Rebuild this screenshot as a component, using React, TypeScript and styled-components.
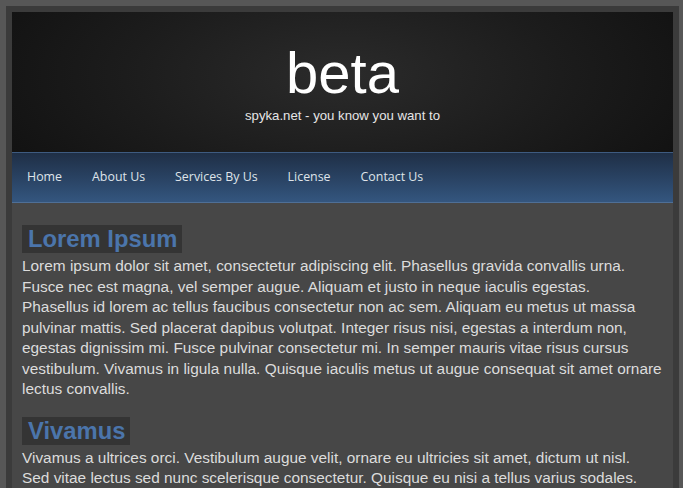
import React from "react";
import styled, { createGlobalStyle } from "styled-components";

const navItems = ["Home", "About Us", "Services By Us", "License", "Contact Us"];

// lines kept as in the original layout so the wrapping matches
const sections = [
  {
    title: "Lorem Ipsum",
    lines: [
      "Lorem ipsum dolor sit amet, consectetur adipiscing elit. Phasellus gravida convallis urna.",
      "Fusce nec est magna, vel semper augue. Aliquam et justo in neque iaculis egestas.",
      "Phasellus id lorem ac tellus faucibus consectetur non ac sem. Aliquam eu metus ut massa",
      "pulvinar mattis. Sed placerat dapibus volutpat. Integer risus nisi, egestas a interdum non,",
      "egestas dignissim mi. Fusce pulvinar consectetur mi. In semper mauris vitae risus cursus",
      "vestibulum. Vivamus in ligula nulla. Quisque iaculis metus ut augue consequat sit amet ornare",
      "lectus convallis.",
    ],
  },
  {
    title: "Vivamus",
    lines: [
      "Vivamus a ultrices orci. Vestibulum augue velit, ornare eu ultricies sit amet, dictum ut nisl.",
      "Sed vitae lectus sed nunc scelerisque consectetur. Quisque eu nisi a tellus varius sodales.",
    ],
  },
];

const App = () => {
  return (
    <>
      <GlobalStyle />
      <Wrapper>
        <Header>
          <SiteTitle>beta</SiteTitle>
          <Tagline>spyka.net - you know you want to</Tagline>
        </Header>
        <NavBar>
          {navItems.map((item) => (
            <NavLink key={item} href="#">
              {item}
            </NavLink>
          ))}
        </NavBar>
        <Content>
          {sections.map((s) => (
            <Section key={s.title}>
              <SectionTitle>{s.title}</SectionTitle>
              <Paragraph>
                {s.lines.map((line, i) => (
                  <Line key={i}>{line}</Line>
                ))}
              </Paragraph>
            </Section>
          ))}
        </Content>
      </Wrapper>
    </>
  );
};

const GlobalStyle = createGlobalStyle`
  html, body {
    margin: 0;
    padding: 0;
    background: #575757;
    overflow: hidden;
  }
  body {
    padding: 6px 4px 0 6px;
    font-family: "Liberation Sans", Arial, sans-serif;
  }
`;

const Wrapper = styled.div`
  border: 6px solid #3b3b3b;
  border-bottom: none;
  background: #474747;
  min-height: 600px;
`;

const Header = styled.div`
  height: 140px;
  display: flex;
  flex-direction: column;
  align-items: center;
  background: radial-gradient(ellipse 60% 120% at 50% 45%, #2b2b2b 0%, #1c1c1c 55%, #111111 100%);
`;

const SiteTitle = styled.h1`
  margin: 31px 0 0;
  font-family: "Liberation Sans", Arial, sans-serif;
  font-weight: normal;
  font-size: 58px;
  line-height: 60px;
  color: #ffffff;
`;

const Tagline = styled.div`
  margin-top: 5px;
  font-size: 13.2px;
  color: #e6e6e6;
`;

const NavBar = styled.nav`
  display: flex;
  height: 49px;
  align-items: center;
  border-top: 1px solid #3e5b80;
  border-bottom: 1px solid #4f6f96;
  background: linear-gradient(to bottom, #1f2f46 0%, #2a4465 55%, #34567f 100%);
`;

const NavLink = styled.a`
  padding: 0 15px;
  margin-top: -2px;
  font-family: "Open Sans", "DejaVu Sans", sans-serif;
  font-size: 12.4px;
  color: #dfe4ea;
  text-decoration: none;
`;

const Content = styled.div`
  padding: 22px 6px 0 10px;
`;

const Section = styled.div`
  margin-bottom: 17px;
`;

const SectionTitle = styled.h2`
  width: fit-content;
  margin: 0 0 3px;
  padding: 0 5px 0 6px;
  background: #343434;
  color: #4b75ab;
  font-size: 23.8px;
  line-height: 28px;
  font-weight: bold;
`;

const Paragraph = styled.p`
  margin: 0;
  font-size: 15.4px;
  line-height: 20.5px;
  color: #dcdcdc;
`;

const Line = styled.span`
  display: block;
  white-space: nowrap;
`;

export default App;
